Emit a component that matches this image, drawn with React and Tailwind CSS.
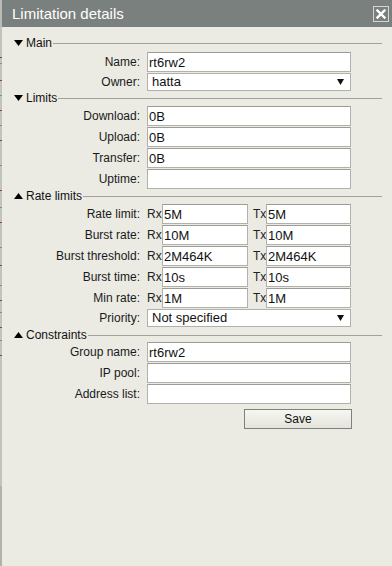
const font = "font-['Liberation_Sans',Arial,sans-serif]";

const Triangle = ({ up }) => (
  <svg width="9" height="6" viewBox="0 0 9 6" className="shrink-0">
    {up ? <polygon points="0,6 9,6 4.5,0" fill="#000" /> : <polygon points="0,0 9,0 4.5,6" fill="#000" />}
  </svg>
);

const SectionHeader = ({ title, up, className = "" }) => (
  <div className={`flex items-center h-[14px] pl-[12px] pr-[10px] ${className}`}>
    <Triangle up={up} />
    <span className="ml-[3px] text-[12px] leading-[14px] text-[#111]">{title}</span>
    <div className="flex-1 h-px bg-[#a2a29c] ml-[1px]" />
  </div>
);

const Label = ({ children, short }) => (
  <div
    className={`w-[138px] text-right text-[12px] text-[#1a1a1a] shrink-0 ${
      short ? "h-[18px] leading-[18px]" : "h-[20px] leading-[20px]"
    }`}
  >
    {children}
  </div>
);

const TextBox = ({ value = "", w = "w-[204px]" }) => (
  <input
    readOnly
    value={value}
    className={`block ${w} h-[20px] bg-white border border-[#b1b1ab] border-t-[#9c9c96] px-[1px] py-0 text-[13px] leading-[18px] text-[#111] outline-none`}
  />
);

const SelectBox = ({ value }) => (
  <div className="w-[204px] h-[18px] bg-white border border-[#b1b1ab] flex items-center pl-[4px] pr-[6px]">
    <span className="flex-1 text-[13px] leading-[16px] text-[#111]">{value}</span>
    <svg width="7" height="6" viewBox="0 0 7 6">
      <polygon points="0,0 7,0 3.5,6" fill="#111" />
    </svg>
  </div>
);

const Row = ({ label, short, children }) => (
  <div className="flex items-start">
    <Label short={short}>{label}</Label>
    <div className="ml-[7px] flex">{children}</div>
  </div>
);

const RateRow = ({ label, rx, tx }) => (
  <div className="flex items-start">
    <Label>{label}</Label>
    <span className="ml-[7px] w-[15px] text-[12px] leading-[20px] text-[#222]">Rx</span>
    <TextBox value={rx} w="w-[86px]" />
    <span className="ml-[5px] w-[13px] text-[12px] leading-[20px] text-[#222]">Tx</span>
    <TextBox value={tx} w="w-[85px]" />
  </div>
);

export default function App() {
  // fragments of the page behind the dialog
  const marks = [57, 63, 80, 95, 110, 125, 140, 165, 190, 207, 222, 247, 265, 285, 300, 312, 327, 340, 355];
  return (
    <div className={`w-[392px] h-[566px] flex overflow-hidden ${font}`}>
      <div className="w-[2px] h-full bg-[#c3c3bd] relative shrink-0">
        <div className="h-[27px] bg-[#b9bcb8]" />
        {marks.map((y, i) => (
          <div
            key={y}
            className={`absolute left-0 w-[2px] h-[1px] ${i % 2 ? "bg-[#8a8a86]" : "bg-[#9b3b2e]"}`}
            style={{ top: y }}
          />
        ))}
        <div className="absolute left-0 bottom-0 w-[2px] h-[80px] bg-[#b3b3ad]" />
      </div>
      <div className="flex-1 flex flex-col bg-[#ebebe4]">
        <div className="h-[27px] bg-[#7a807d] flex items-center pl-[10px] pr-[3px]">
          <span className="flex-1 text-white text-[15px] leading-[18px]">Limitation details</span>
          <div className="w-[16px] h-[16px] border border-[#d3d5d3] flex items-center justify-center">
            <svg width="10" height="10" viewBox="0 0 10 10">
              <path d="M1.5 1.5 L8.5 8.5 M8.5 1.5 L1.5 8.5" stroke="#fff" strokeWidth="2.4" strokeLinecap="square" />
            </svg>
          </div>
        </div>

        <div className="pt-[9px]">
          <SectionHeader title="Main" />
          <div className="mt-[2px] flex flex-col gap-[1px]">
            <Row label="Name:"><TextBox value="rt6rw2" /></Row>
            <Row label="Owner:" short><SelectBox value="hatta" /></Row>
          </div>

          <SectionHeader title="Limits" />
          <div className="mt-[1px] flex flex-col gap-[1px]">
            <Row label="Download:"><TextBox value="0B" /></Row>
            <Row label="Upload:"><TextBox value="0B" /></Row>
            <Row label="Transfer:"><TextBox value="0B" /></Row>
            <Row label="Uptime:"><TextBox /></Row>
          </div>

          <SectionHeader title="Rate limits" up />
          <div className="mt-[1px] flex flex-col gap-[1px]">
            <RateRow label="Rate limit:" rx="5M" tx="5M" />
            <RateRow label="Burst rate:" rx="10M" tx="10M" />
            <RateRow label="Burst threshold:" rx="2M464K" tx="2M464K" />
            <RateRow label="Burst time:" rx="10s" tx="10s" />
            <RateRow label="Min rate:" rx="1M" tx="1M" />
            <Row label="Priority:" short><SelectBox value="Not specified" /></Row>
          </div>

          <SectionHeader title="Constraints" up className="mt-[1px]" />
          <div className="flex flex-col gap-[1px]">
            <Row label="Group name:"><TextBox value="rt6rw2" /></Row>
            <Row label="IP pool:"><TextBox /></Row>
            <Row label="Address list:"><TextBox /></Row>
          </div>

          <div className="mt-[5px] pl-[242px]">
            <button className="block w-[108px] h-[20px] border border-[#7d827f] bg-gradient-to-b from-[#f7f7f2] to-[#e4e4dc] text-[12px] text-[#111] leading-[18px]">
              Save
            </button>
          </div>
        </div>
      </div>
    </div>
  );
}
